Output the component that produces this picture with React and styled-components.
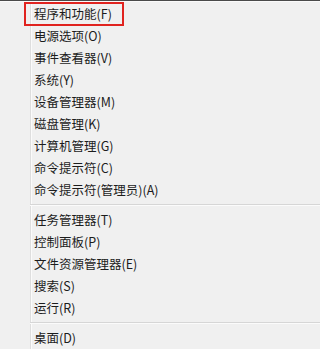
import React from "react";
import styled, { createGlobalStyle } from "styled-components";

const GlobalStyle = createGlobalStyle`
  html, body {
    margin: 0;
    padding: 0;
    background: #f0f0f0;
  }
`;

const items = [
    [
        { label: "程序和功能(F)", marked: true },
        { label: "电源选项(O)" },
        { label: "事件查看器(V)" },
        { label: "系统(Y)" },
        { label: "设备管理器(M)" },
        { label: "磁盘管理(K)" },
        { label: "计算机管理(G)" },
        { label: "命令提示符(C)" },
        { label: "命令提示符(管理员)(A)" }
    ],
    [
        { label: "任务管理器(T)" },
        { label: "控制面板(P)" },
        { label: "文件资源管理器(E)" },
        { label: "搜索(S)" },
        { label: "运行(R)" }
    ],
    [
        { label: "桌面(D)" }
    ]
];

const App = () => {
    return (
        <>
            <GlobalStyle />
            <Menu>
                {items.map((group, gi) => (
                    <React.Fragment key={gi}>
                        {gi > 0 && <Separator />}
                        {group.map(item => (
                            <MenuItem key={item.label} $marked={item.marked}>
                                {item.label}
                            </MenuItem>
                        ))}
                    </React.Fragment>
                ))}
            </Menu>
        </>
    );
};

export default App;


const Menu = styled.div`
  width: 100%;
  height: 349px;
  box-sizing: border-box;
  border-top: 1px solid #4a4a4a;
  padding-top: 2px;
  box-shadow: inset 0 1px 0 #fafafa;
  background:
    linear-gradient(to right,
      transparent 30px,
      #dedede 30px, #dedede 31px,
      #fbfbfb 31px, #fbfbfb 32px,
      transparent 32px),
    #f0f0f0;
  font-family: "Noto Sans CJK SC", sans-serif;
  font-size: 12.5px;
  color: #1c1c1c;
  overflow: hidden;
`;

const MenuItem = styled.div`
  position: relative;
  height: 22px;
  line-height: 22px;
  padding-left: 34px;
  white-space: nowrap;

  ${props => props.$marked && `
    &::after {
      content: "";
      position: absolute;
      left: 24px;
      top: -1px;
      width: 100px;
      height: 24px;
      box-sizing: border-box;
      border: 2px solid #e0231f;
    }
  `}
`;

const Separator = styled.div`
  height: 8px;
  margin-left: 30px;
  background: linear-gradient(to bottom,
    transparent 3px,
    #d6d6d6 3px, #d6d6d6 4px,
    #fbfbfb 4px, #fbfbfb 5px,
    transparent 5px);
`;
